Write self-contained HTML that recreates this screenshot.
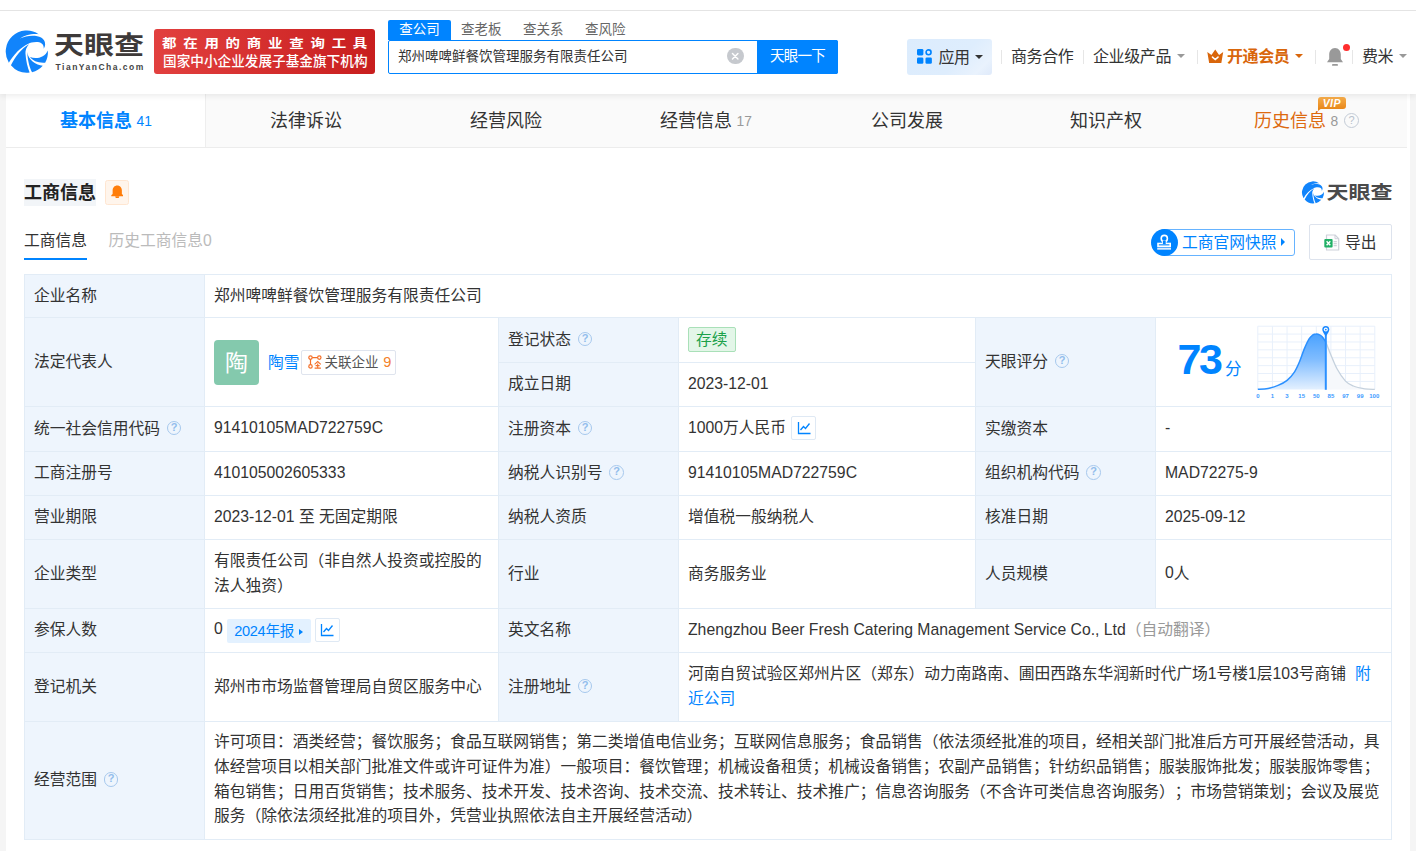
<!DOCTYPE html>
<html lang="zh-CN">
<head>
<meta charset="utf-8">
<title>天眼查</title>
<style>
*{box-sizing:border-box;margin:0;padding:0}
html,body{width:1416px;height:851px;overflow:hidden}
body{background:#f5f5f5;text-spacing-trim:space-all;font-family:"Liberation Sans","Noto Sans CJK SC",sans-serif;color:#333;font-size:15.75px;position:relative}
.abs{position:absolute}
/* header */
#hdr{position:absolute;left:0;top:0;width:1416px;height:94px;background:#fff;box-shadow:0 2px 6px rgba(0,0,0,.08);z-index:5}
#topline{position:absolute;left:0;top:10px;width:1416px;height:1px;background:#e4e4e4}
#logoTxt{position:absolute;left:54px;top:23px;font-size:30px;font-weight:bold;color:#3e3a39;line-height:44px;white-space:nowrap;transform:scaleY(.85);transform-origin:0 50%}
#logoSub{position:absolute;left:55.5px;top:60px;font-size:8.5px;font-weight:bold;color:#444;letter-spacing:1.5px;line-height:14px;white-space:nowrap}
#banner{position:absolute;left:154px;top:29px;width:221px;height:45px;border-radius:3px;background:linear-gradient(90deg,#e2403f,#c81e1e);color:#fff;white-space:nowrap}
#banner .l1{position:absolute;left:8.300px;top:4.800px;font-size:12.500px;font-weight:bold;letter-spacing:5.830px;line-height:20px;transform:scaleX(1.157);transform-origin:0 0}
#banner .l2{position:absolute;left:9px;top:22.400px;font-size:14.200px;line-height:20px;font-weight:500;transform:scaleX(.961);transform-origin:0 0}
.stab{position:absolute;top:20px;height:20px;line-height:19px;font-size:13.5px;color:#666;white-space:nowrap}
#stabA{left:388px;width:63px;background:#0084ff;color:#fff;text-align:center;border-radius:2px 2px 0 0}
#sbox{position:absolute;left:388px;top:40px;width:450px;height:34px;border:1.5px solid #0084ff;border-radius:2px;background:#fff}
#sboxTxt{position:absolute;left:398px;top:47px;font-size:13.5px;line-height:20px;color:#333;white-space:nowrap}
#sbtn{position:absolute;left:757px;top:40px;width:81px;height:34px;background:#0084ff;color:#fff;font-size:14.5px;line-height:33px;text-align:center;border-radius:0 2px 2px 0;letter-spacing:-.8px}
#clr{position:absolute;left:727.400px;top:48px;width:16.400px;height:16.400px;border-radius:50%;background:#c6c9ce}
.nav{position:absolute;top:44.800px;line-height:24px;font-size:16px;color:#333;white-space:nowrap;letter-spacing:-.4px}
.sep{position:absolute;top:50px;width:1px;height:14px;background:#e6e6e6}
.caret{position:absolute;width:0;height:0;border-left:4px solid transparent;border-right:4px solid transparent;border-top:4.5px solid #999}
#appBtn{position:absolute;left:907px;top:38.600px;width:85px;height:36px;border-radius:3px;background:linear-gradient(135deg,#dcecfd,#deedfd 60%,#e9f2fd 85%,#dfeafa)}
/* tabs */
#tabs{position:absolute;left:6px;top:94px;width:1401px;height:54px;background:#fafafa;border-bottom:1px solid #ececec}
#tabA{position:absolute;left:0;top:0;width:200px;height:53px;background:#fff;border-right:1px solid #eee}
.tab{position:absolute;top:13.800px;line-height:26px;font-size:18px;color:#333;white-space:nowrap}
.tab small{position:relative;top:-1.300px;font-size:13.800px;margin-left:-.5px;color:#999;font-weight:normal}
/* container */
#main{position:absolute;left:6px;top:94px;width:1404px;height:757px;background:#fff}
table{position:absolute;left:24px;top:274px;width:1368px;border-collapse:collapse;table-layout:fixed;z-index:1}
td{border:1px solid #e2ecf6;padding:0 9px 1.600px;font-size:15.75px;line-height:25px;color:#333;vertical-align:middle;background:#fff;overflow:hidden}
td.k{background:#eef5fd}
.q{display:inline-block;width:14.800px;height:14.800px;border:1.500px solid #a6c8ed;border-radius:50%;color:#92bdec;font-size:11px;font-weight:bold;line-height:11.800px;text-align:center;vertical-align:1.5px;margin-left:6.700px;font-family:"Liberation Sans",sans-serif;position:relative;top:-1.600px}
.en{font-size:15.75px;position:relative;top:-.6px}
a,.lnk{color:#0084ff;text-decoration:none}
.ibtn{display:inline-block;width:25px;height:24px;border:1px solid #dfe9f4;border-radius:2px;vertical-align:middle;position:relative;top:-1.5px;background:#fff}
</style>
</head>
<body>
<div id="hdr">
  <div id="topline"></div>
  <svg class="abs" style="left:2px;top:26px" width="52" height="52" viewBox="0 0 851 851"><g fill="#1184fb"><path d="M112 600 A345 345 0 0 1 600 134 C480 120 360 160 290 205 C400 150 560 140 640 190 C700 225 730 300 682 372 C690 300 640 262 560 262 C500 262 460 275 432 290 C300 350 190 470 112 600Z"/><path d="M146 642 C220 500 320 370 442 300 C400 350 380 400 384 450 C390 560 420 680 452 762 A345 345 0 0 1 146 642Z"/><path d="M412 425 C420 560 450 680 492 757 A345 345 0 0 0 667 650 C560 640 430 560 412 425Z"/><path d="M750 400 A345 345 0 0 1 706 600 C600 610 500 570 458 508 C560 545 700 520 750 400Z"/></g></svg>
  <div id="logoTxt">天眼查</div>
  <div id="logoSub">TianYanCha.com</div>
  <div id="banner"><div class="l1">都在用的商业查询工具</div><div class="l2">国家中小企业发展子基金旗下机构</div></div>

  <div class="stab" id="stabA">查公司</div>
  <div class="stab" style="left:461px">查老板</div>
  <div class="stab" style="left:523px">查关系</div>
  <div class="stab" style="left:585px">查风险</div>
  <div id="sbox"></div>
  <div id="sboxTxt">郑州啤啤鲜餐饮管理服务有限责任公司</div>
  <div id="clr"><svg width="16.400" height="16.400" viewBox="0 0 18 18" style="display:block"><path d="M6 6L12 12M12 6L6 12" stroke="#fff" stroke-width="1.6" stroke-linecap="round"/></svg></div>
  <div id="sbtn">天眼一下</div>

  <div id="appBtn"></div>
  <svg class="abs" style="left:917.300px;top:49.100px" width="15.500" height="15.500" viewBox="0 0 17 17">
    <rect x="0" y="0" width="7" height="7" rx="1.5" fill="#0084ff"/>
    <circle cx="12.7" cy="3.6" r="2.7" fill="none" stroke="#0084ff" stroke-width="1.8"/>
    <rect x="0" y="9.3" width="7" height="7" rx="1.5" fill="#0084ff"/>
    <rect x="9.3" y="9.3" width="7" height="7" rx="1.5" fill="#0084ff"/>
  </svg>
  <div class="nav" style="left:938.500px;top:45.500px">应用</div>
  <div class="caret" style="left:975px;top:54.800px;border-top-color:#333"></div>
  <div class="sep" style="left:1001px"></div>
  <div class="nav" style="left:1011px">商务合作</div>
  <div class="sep" style="left:1083px"></div>
  <div class="nav" style="left:1093px">企业级产品</div>
  <div class="caret" style="left:1177px;top:53.500px"></div>
  <div class="sep" style="left:1197px"></div>
  <svg class="abs" style="left:1207px;top:49px" width="16.500" height="14.500" viewBox="0 0 16 14" preserveAspectRatio="none"><path d="M0.300 3L4.300 5.800L8 0.500L11.700 5.800L15.700 3L13.900 13.500H2.100Z" fill="#d9660b"/><path d="M5.300 7.800L8 10.200L10.700 7.800" stroke="#fff" stroke-width="1.500" fill="none" stroke-linecap="round"/></svg>
  <div class="nav" style="left:1227px;color:#d9660b;font-weight:bold">开通会员</div>
  <div class="caret" style="left:1295px;top:53.500px;border-top-color:#d9660b"></div>
  <div class="sep" style="left:1315px"></div>
  <svg class="abs" style="left:1325px;top:45px" width="20" height="24" viewBox="0 0 20 24">
    <path d="M10 3C6.3 3 4.2 6 4.2 9.5V14L2 17.3H18L15.8 14V9.5C15.8 6 13.7 3 10 3Z" fill="#999"/>
    <rect x="7" y="19" width="6" height="1.8" rx=".9" fill="#999"/>
  </svg>
  <div class="abs" style="left:1343px;top:44px;width:7px;height:7px;border-radius:50%;background:#ff2d2d"></div>
  <div class="sep" style="left:1352px"></div>
  <div class="nav" style="left:1362px">费米</div>
  <div class="caret" style="left:1399px;top:53.500px"></div>
</div>

<div id="main"></div>
<div id="tabs">
  <div id="tabA"></div>
  <div class="tab" style="left:54px;color:#0084ff;font-weight:bold">基本信息 <small style="color:#0084ff">41</small></div>
  <div class="tab" style="left:264px">法律诉讼</div>
  <div class="tab" style="left:464px">经营风险</div>
  <div class="tab" style="left:654px">经营信息 <small>17</small></div>
  <div class="tab" style="left:865px">公司发展</div>
  <div class="tab" style="left:1064px">知识产权</div>
  <div class="tab" style="left:1248px;color:#dd6a10">历史信息 <small>8</small></div>
  <div class="abs" style="left:1312px;top:3px;width:27.500px;height:12px;border-radius:3px 3px 3px 0;background:linear-gradient(180deg,#f7ae4c,#e8871a);color:#fff;font-size:10.500px;font-weight:bold;font-style:italic;line-height:12px;text-align:center;font-family:'Liberation Sans',sans-serif;letter-spacing:.4px">VIP</div>
  <div class="abs" style="left:1312px;top:14px;width:0;height:0;border-top:3.500px solid #e8871a;border-right:4px solid transparent"></div>
  <div class="abs" style="left:1338px;top:18.500px;width:15px;height:15px;border:1.300px solid #c3cbd6;border-radius:50%;color:#b8c1cc;font-size:11px;line-height:12.500px;text-align:center;font-family:'Liberation Sans',sans-serif">?</div>
</div>


<!-- section header -->
<div class="abs" style="left:24px;top:179px;width:72px;height:27px;background:#f2f5f8"></div>
<div class="abs" style="left:24px;top:179.700px;font-size:18px;font-weight:bold;line-height:26px;color:#222;white-space:nowrap">工商信息</div>
<div class="abs" style="left:105px;top:180px;width:24px;height:25px;border:1px solid #ffe6d1;border-radius:2.500px;background:#fff5ec"></div>
<svg class="abs" style="left:110.700px;top:184.600px" width="12.500" height="13.800" viewBox="0 0 13 14"><path d="M6.500 0.300C3.600 0.300 1.700 2.600 1.700 5.400V9.200L0.300 10.400V11.600H12.700V10.400L11.300 9.200V5.400C11.300 2.600 9.400 0.300 6.500 0.300Z" fill="#ff7d0a"/><path d="M4.400 11.600A2.100 2.100 0 0 0 8.600 11.600Z" fill="#ff7d0a"/></svg>

<div class="abs" style="left:24px;top:229.400px;font-size:15.75px;line-height:24px;color:#333;white-space:nowrap">工商信息</div>
<div class="abs" style="left:24px;top:257.700px;width:63px;height:2px;background:#0084ff"></div>
<div class="abs" style="left:108.500px;top:229.400px;font-size:15.75px;line-height:24px;color:#bbb;white-space:nowrap">历史工商信息0</div>

<!-- right side logo -->
<svg class="abs" id="logo2" style="left:1300px;top:179.200px" width="27.200" height="27.200" viewBox="0 0 851 851"><g fill="#1184fb"><path d="M112 600 A345 345 0 0 1 600 134 C480 120 360 160 290 205 C400 150 560 140 640 190 C700 225 730 300 682 372 C690 300 640 262 560 262 C500 262 460 275 432 290 C300 350 190 470 112 600Z"/><path d="M146 642 C220 500 320 370 442 300 C400 350 380 400 384 450 C390 560 420 680 452 762 A345 345 0 0 1 146 642Z"/><path d="M412 425 C420 560 450 680 492 757 A345 345 0 0 0 667 650 C560 640 430 560 412 425Z"/><path d="M750 400 A345 345 0 0 1 706 600 C600 610 500 570 458 508 C560 545 700 520 750 400Z"/></g></svg>
<div class="abs" style="left:1326.500px;top:178px;font-size:22px;font-weight:bold;line-height:30px;color:#4a4a4a;white-space:nowrap;transform:scaleY(.85);transform-origin:0 50%">天眼查</div>

<!-- snapshot button -->
<div class="abs" style="left:1160px;top:229px;width:135px;height:27px;border:1px solid #66b3ff;border-radius:3px;background:#fff"></div>
<div class="abs" style="left:1151px;top:229px;width:27px;height:27px;border-radius:50%;background:#0084ff"></div>
<svg class="abs" style="left:1156px;top:233px" width="17" height="18" viewBox="0 0 17 18"><g fill="none" stroke="#fff" stroke-width="1.600"><circle cx="8.300" cy="5.500" r="3.100"/><path d="M6.900 8.300V10.300M9.700 8.300V10.300"/><rect x="2" y="10.500" width="12.200" height="2.700"/></g><rect x="6.900" y="7.800" width="2.800" height="3.400" fill="#0084ff"/><rect x="1.200" y="14.600" width="13.800" height="2.100" fill="#dcecff"/></svg>
<div class="abs" style="left:1182px;top:230.500px;font-size:15.75px;line-height:24px;color:#0084ff;white-space:nowrap">工商官网快照</div>
<div class="abs" style="left:1281px;top:238px;width:0;height:0;border-top:4px solid transparent;border-bottom:4px solid transparent;border-left:4.5px solid #0084ff"></div>

<!-- export -->
<div class="abs" style="left:1309px;top:224px;width:83px;height:36px;border:1px solid #dde3ed;border-radius:2px;background:#fff"></div>
<svg class="abs" style="left:1323.500px;top:233.500px" width="16" height="17" viewBox="0 0 16 17"><path d="M2.500 1H11L14.700 4.700V16H2.500Z" fill="#fdfdfe" stroke="#cdd1d9" stroke-width="1.200" stroke-linejoin="round"/><path d="M11 1V4.700H14.700" fill="none" stroke="#cdd1d9" stroke-width="1"/><rect x="9.600" y="7.200" width="3.200" height="1" fill="#c4c8d0"/><rect x="9.600" y="9.200" width="3.200" height="1" fill="#c4c8d0"/><rect x="9.600" y="11.200" width="3.200" height="1" fill="#c4c8d0"/><rect x="0.300" y="5.100" width="8.300" height="8.400" rx="1" fill="#21b066"/><path d="M2.600 7.300L6.300 11.300M6.300 7.300L2.600 11.300" stroke="#fff" stroke-width="1.400"/></svg>
<div class="abs" style="left:1345px;top:231.200px;font-size:15.75px;line-height:24px;color:#333;white-space:nowrap">导出</div>

<table>
<colgroup><col style="width:180px"><col style="width:294px"><col style="width:180px"><col style="width:297px"><col style="width:180px"><col style="width:236px"></colgroup>
<tr style="height:43px"><td class="k">企业名称</td><td colspan="5">郑州啤啤鲜餐饮管理服务有限责任公司</td></tr>
<tr style="height:45px"><td class="k" rowspan="2">法定代表人</td>
  <td rowspan="2" style="padding-bottom:0"><span style="display:inline-block;width:45px;height:45px;border-radius:4px;background:#84c9ad;color:#fff;font-size:23px;line-height:47px;text-align:center;vertical-align:middle">陶</span><a style="margin-left:9px;vertical-align:middle">陶雪</a><span style="display:inline-block;margin-left:1px;height:25px;border:1px solid #dfe4ee;border-radius:2px;padding:0 4px 0 6px;font-size:13.5px;line-height:23px;vertical-align:middle;color:#555;white-space:nowrap"><svg width="14" height="14" viewBox="0 0 14 14" style="vertical-align:-2px;margin-right:3px"><g fill="none" stroke="#f4702a" stroke-width="1.2"><circle cx="2.500" cy="2.600" r="1.700"/><circle cx="11.300" cy="2.600" r="1.700"/><circle cx="2.500" cy="11.400" r="1.700"/><path d="M4.200 2.600H9.600M2.500 4.300V9.700"/><path d="M6.600 9.300L9.700 6.600L12.800 9.300M9.700 8.600V12.800M7.600 10.600H11.600M6.600 13.100H12.900" stroke-width="1.100"/></g></svg>关联企业 <span style="color:#f4802a;font-size:14.600px;margin-left:1px">9</span></span></td>
  <td class="k">登记状态<span class="q">?</span></td><td><span style="display:inline-block;height:25px;padding:0 7px;border:1px solid #a9e0b8;border-radius:2px;background:#e3f6e8;color:#1ba14a;font-size:15.75px;line-height:23px;position:relative;top:.300px">存续</span></td>
  <td class="k" rowspan="2">天眼评分<span class="q">?</span></td>
  <td rowspan="2" style="position:relative;padding:0">
    <div class="abs" style="left:21.500px;top:15.700px;font-size:43px;font-weight:bold;color:#0084ff;line-height:50px;letter-spacing:-2.500px">73</div>
    <div class="abs" style="left:69px;top:38.500px;font-size:16.500px;color:#0084ff;line-height:24px">分</div>
    <svg class="abs" style="left:96px;top:4px" width="134" height="80" viewBox="0 0 134 80">
      <defs><linearGradient id="g1" x1="0" y1="0" x2="0" y2="1"><stop offset="0" stop-color="#4aa2ff"/><stop offset=".45" stop-color="#7fbcff"/><stop offset="1" stop-color="#e3f0ff"/></linearGradient></defs>
      <path d="M5.80 4.20H122.80M5.80 12.09H122.80M5.80 19.98H122.80M5.80 27.87H122.80M5.80 35.76H122.80M5.80 43.65H122.80M5.80 51.54H122.80M5.80 59.43H122.80M5.80 4.20V67.32M20.43 4.20V67.32M35.05 4.20V67.32M49.67 4.20V67.32M64.30 4.20V67.32M78.92 4.20V67.32M93.55 4.20V67.32M108.17 4.20V67.32M122.80 4.20V67.32" stroke="#e8f0fb" stroke-width="1" fill="none"/>
      <path d="M73.8 19.8C74.7 22.0 77.0 28.4 78.9 32.9C80.8 37.4 82.6 42.4 85.0 46.8C87.4 51.2 90.8 56.2 93.5 59.1C96.2 62.0 98.1 62.7 101.3 64.0C104.5 65.3 109.2 66.2 112.8 66.8C116.4 67.4 121.1 67.3 122.8 67.4V67.400H73.800Z" fill="#f6f8fb"/>
      <path d="M5.8 67.3C7.5 67.2 12.7 67.2 16.1 66.5C19.5 65.8 22.8 64.8 26.0 63.4C29.2 62.0 32.4 60.5 35.1 58.3C37.9 56.1 40.4 53.1 42.4 50.1C44.4 47.1 45.7 44.0 47.3 40.2C48.9 36.4 50.6 31.0 52.2 27.1C53.8 23.2 55.7 19.1 57.1 16.8C58.5 14.5 59.3 14.0 60.5 13.2C61.7 12.4 63.0 12.1 64.2 12.1C65.3 12.0 66.5 12.3 67.5 12.8C68.5 13.3 69.2 13.6 70.2 14.8C71.2 16.0 73.2 19.0 73.8 19.8V67.400H5.800Z" fill="url(#g1)"/>
      <path d="M73.8 19.8C74.7 22.0 77.0 28.4 78.9 32.9C80.8 37.4 82.6 42.4 85.0 46.8C87.4 51.2 90.8 56.2 93.5 59.1C96.2 62.0 98.1 62.7 101.3 64.0C104.5 65.3 109.2 66.2 112.8 66.8C116.4 67.4 121.1 67.3 122.8 67.4" fill="none" stroke="#c5d1dd" stroke-width="1.300"/>
      <path d="M5.8 67.3C7.5 67.2 12.7 67.2 16.1 66.5C19.5 65.8 22.8 64.8 26.0 63.4C29.2 62.0 32.4 60.5 35.1 58.3C37.9 56.1 40.4 53.1 42.4 50.1C44.4 47.1 45.7 44.0 47.3 40.2C48.9 36.4 50.6 31.0 52.2 27.1C53.8 23.2 55.7 19.1 57.1 16.8C58.5 14.5 59.3 14.0 60.5 13.2C61.7 12.4 63.0 12.1 64.2 12.1C65.3 12.0 66.5 12.3 67.5 12.8C68.5 13.3 69.2 13.6 70.2 14.8C71.2 16.0 73.2 19.0 73.8 19.8" fill="none" stroke="#2b90ff" stroke-width="1.500"/>
      <path d="M73.800 12V67.800" stroke="#2b90ff" stroke-width="2"/>
      <path d="M73.800 14.300C71.300 10.800 70.300 9.300 70.300 7.600A3.500 3.500 0 0 1 77.300 7.600C77.300 9.300 76.300 10.800 73.800 14.300Z" fill="#1a88ff"/>
      <circle cx="73.800" cy="7.600" r="2" fill="#fff"/><circle cx="73.800" cy="7.600" r=".900" fill="#1a88ff"/>
      <g font-family="Liberation Sans, sans-serif" font-size="6" font-weight="bold" fill="#3d9bff" text-anchor="middle"><text x="5.8" y="75.800">0</text><text x="20.4" y="75.800">1</text><text x="35.0" y="75.800">3</text><text x="49.7" y="75.800">15</text><text x="64.3" y="75.800">50</text><text x="78.9" y="75.800">85</text><text x="93.5" y="75.800">97</text><text x="108.2" y="75.800">99</text><text x="122.3" y="75.800">100</text></g>
    </svg>
  </td></tr>
<tr style="height:44px"><td class="k">成立日期</td><td><span class="en">2023-12-01</span></td></tr>
<tr style="height:45px"><td class="k">统一社会信用代码<span class="q">?</span></td><td><span class="en">91410105MAD722759C</span></td><td class="k">注册资本<span class="q">?</span></td><td><span class="en">1000</span>万人民币 <span class="ibtn" style="margin-left:1px;top:-1.100px"><svg width="22" height="22" viewBox="0 0 22 22" class="abs" style="left:.5px;top:0"><path d="M5.500 5V16.500H17.500" stroke="#0084ff" stroke-width="1.3" fill="none"/><path d="M7.500 13L10.500 9.500L12.500 11.500L16.500 6.500" stroke="#0084ff" stroke-width="1.3" fill="none"/></svg></span></td><td class="k">实缴资本</td><td><span class="en">-</span></td></tr>
<tr style="height:44px"><td class="k">工商注册号</td><td><span class="en">410105002605333</span></td><td class="k">纳税人识别号<span class="q">?</span></td><td><span class="en">91410105MAD722759C</span></td><td class="k">组织机构代码<span class="q">?</span></td><td><span class="en">MAD72275-9</span></td></tr>
<tr style="height:44px"><td class="k">营业期限</td><td><span class="en">2023-12-01</span> 至 无固定期限</td><td class="k">纳税人资质</td><td>增值税一般纳税人</td><td class="k">核准日期</td><td><span class="en">2025-09-12</span></td></tr>
<tr style="height:69px"><td class="k">企业类型</td><td>有限责任公司（非自然人投资或控股的法人独资）</td><td class="k">行业</td><td>商务服务业</td><td class="k">人员规模</td><td><span class="en">0</span>人</td></tr>
<tr style="height:44px"><td class="k">参保人数</td><td><span class="en">0</span> <span style="display:inline-block;height:24px;padding:0 7.500px 0 7px;background:#e3f1ff;border-radius:2px;color:#0084ff;font-size:14.600px;line-height:24px;vertical-align:middle;letter-spacing:-.3px;margin-left:0;position:relative;top:0">2024年报<span style="display:inline-block;width:0;height:0;border-top:3.5px solid transparent;border-bottom:3.5px solid transparent;border-left:4.500px solid #0084ff;margin-left:5px;vertical-align:1px"></span></span> <span class="ibtn" style="top:-.500px"><svg width="22" height="22" viewBox="0 0 22 22" class="abs" style="left:.5px;top:0"><path d="M5.500 5V16.500H17.500" stroke="#0084ff" stroke-width="1.3" fill="none"/><path d="M7.500 13L10.500 9.500L12.500 11.500L16.500 6.500" stroke="#0084ff" stroke-width="1.3" fill="none"/></svg></span></td><td class="k">英文名称</td><td colspan="3"><span class="en">Zhengzhou Beer Fresh Catering Management Service Co., Ltd</span><span style="color:#999">（自动翻译）</span></td></tr>
<tr style="height:69px"><td class="k">登记机关</td><td>郑州市市场监督管理局自贸区服务中心</td><td class="k">注册地址<span class="q">?</span></td><td colspan="3">河南自贸试验区郑州片区（郑东）动力南路南、圃田西路东华润新时代广场<span class="en">1</span>号楼<span class="en">1</span>层<span class="en">103</span>号商铺<a style="margin-left:9px">附近公司</a></td></tr>
<tr style="height:118px"><td class="k">经营范围<span class="q">?</span></td><td colspan="5" style="line-height:24.750px">许可项目：酒类经营；餐饮服务；食品互联网销售；第二类增值电信业务；互联网信息服务；食品销售（依法须经批准的项目，经相关部门批准后方可开展经营活动，具体经营项目以相关部门批准文件或许可证件为准）一般项目：餐饮管理；机械设备租赁；机械设备销售；农副产品销售；针纺织品销售；服装服饰批发；服装服饰零售；箱包销售；日用百货销售；技术服务、技术开发、技术咨询、技术交流、技术转让、技术推广；信息咨询服务（不含许可类信息咨询服务）；市场营销策划；会议及展览服务（除依法须经批准的项目外，凭营业执照依法自主开展经营活动）</td></tr>
</table>
</body>
</html>
